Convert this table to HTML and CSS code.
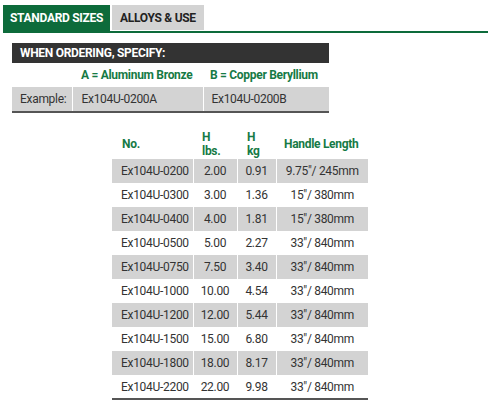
FILE: index.html
```html
<!DOCTYPE html>
<html>
<head>
<meta charset="utf-8">
<link rel="stylesheet" href="styles.css">
</head>
<body>
<div class="tabs">
  <div class="tab active">STANDARD SIZES</div>
  <div class="tab">ALLOYS &amp; USE</div>
</div>
<div class="content">
  <div class="order">
    <div class="order-bar">WHEN ORDERING, SPECIFY:</div>
    <table class="order-table">
      <colgroup><col class="w1"><col class="w2"><col class="w3"></colgroup>
      <tr class="legend">
        <td class="c1"></td>
        <td class="c2">A = Aluminum Bronze</td>
        <td class="c3">B = Copper Beryllium</td>
      </tr>
      <tr class="example">
        <td class="c1">Example:</td>
        <td class="c2">Ex104U-0200A</td>
        <td class="c3">Ex104U-0200B</td>
      </tr>
    </table>
  </div>
  <table class="sizes">
    <colgroup><col class="k1"><col class="k2"><col class="k3"><col class="k4"></colgroup>
    <thead>
      <tr>
        <th class="s1">No.</th>
        <th class="s2">H<br>lbs.</th>
        <th class="s3">H<br>kg</th>
        <th class="s4">Handle Length</th>
      </tr>
    </thead>
    <tbody>
      <tr><td>Ex104U-0200</td><td>2.00</td><td>0.91</td><td>9.75"/ 245mm</td></tr>
      <tr><td>Ex104U-0300</td><td>3.00</td><td>1.36</td><td>15"/ 380mm</td></tr>
      <tr><td>Ex104U-0400</td><td>4.00</td><td>1.81</td><td>15"/ 380mm</td></tr>
      <tr><td>Ex104U-0500</td><td>5.00</td><td>2.27</td><td>33"/ 840mm</td></tr>
      <tr><td>Ex104U-0750</td><td>7.50</td><td>3.40</td><td>33"/ 840mm</td></tr>
      <tr><td>Ex104U-1000</td><td>10.00</td><td>4.54</td><td>33"/ 840mm</td></tr>
      <tr><td>Ex104U-1200</td><td>12.00</td><td>5.44</td><td>33"/ 840mm</td></tr>
      <tr><td>Ex104U-1500</td><td>15.00</td><td>6.80</td><td>33"/ 840mm</td></tr>
      <tr><td>Ex104U-1800</td><td>18.00</td><td>8.17</td><td>33"/ 840mm</td></tr>
      <tr><td>Ex104U-2200</td><td>22.00</td><td>9.98</td><td>33"/ 840mm</td></tr>
    </tbody>
  </table>
</div>
</body>
</html>
```
FILE: styles.css
```css
* { box-sizing: border-box; }
body {
  margin: 0;
  background: #fff;
  font-family: Roboto, "Liberation Sans", sans-serif;
  font-size: 12px;
  letter-spacing: -0.3px;
  color: #333;
}
.tabs {
  display: flex;
  align-items: flex-start;
  gap: 2px;
  margin: 5px 0 0 3px;
  width: 485px;
  border-bottom: 2px solid #0d6b3b;
}
.tab {
  height: 25px;
  padding: 0 8px;
  display: flex;
  align-items: center;
  font-weight: 700;
  font-size: 12px;
  color: #222;
  background: #d3d3d3;
  white-space: nowrap;
}
.tab.active {
  height: 26px;
  padding: 0 7px;
  background: #0d6b3b;
  color: #fff;
}
.content {
  padding: 10px 0 0 12px;
}
.order { width: 317px; }
.order-bar {
  height: 20px;
  display: flex;
  align-items: center;
  padding-left: 8px;
  background: #333;
  color: #fff;
  font-weight: 700;
}
.order-table {
  width: 317px;
  table-layout: fixed;
  border-collapse: collapse;
}
.order-table .w1 { width: 60px; }
.order-table .w2 { width: 131px; }
.order-table .w3 { width: 126px; }
.order-table td { padding: 0; white-space: nowrap; }
.order-table .c1 { padding-left: 8px; }
.order-table .c2 { padding-left: 9px; }
.order-table .c3 { padding-left: 7px; }
.legend td {
  height: 24px;
  color: #167a45;
  font-weight: 700;
}
.example td {
  height: 25px;
  background: #d3d3d3;
  border-bottom: 2px solid #555;
}
.example td + td { border-left: 1px solid #fff; }
.example .c3 { padding-left: 8px; }

.sizes {
  margin: 15px 0 0 100px;
  width: 256px;
  table-layout: fixed;
  border-collapse: collapse;
}
.sizes .k1 { width: 81px; }
.sizes .k2 { width: 44px; }
.sizes .k3 { width: 39px; }
.sizes .k4 { width: 92px; }
.sizes th {
  height: 31px;
  padding: 0 0 0 9px;
  text-align: left;
  vertical-align: middle;
  color: #167a45;
  font-weight: 700;
  line-height: 14px;
  white-space: nowrap;
}
.sizes .s1 { padding-left: 10px; }
.sizes .s3 { padding-left: 10px; }
.sizes .s4 { padding-left: 8px; }
.sizes td {
  height: 24px;
  padding: 0;
  text-align: center;
  white-space: nowrap;
}
.sizes td:first-child { text-align: left; padding-left: 9px; }
.sizes td + td { border-left: 1px solid #fff; }
.sizes tbody tr:nth-child(odd) td { background: #d3d3d3; }
.sizes tbody tr:last-child td { border-bottom: 2px solid #555; }
```
